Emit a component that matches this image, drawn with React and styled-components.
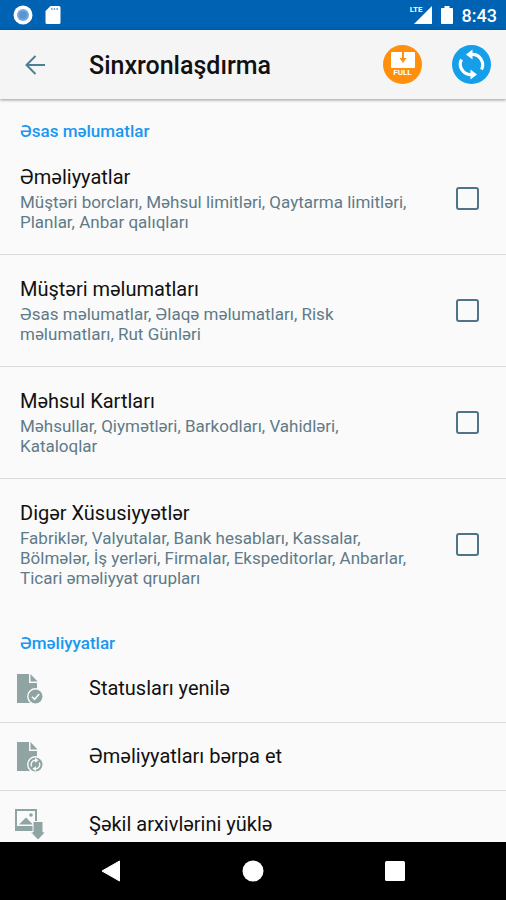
import React from "react";
import styled, { createGlobalStyle } from "styled-components";

const settings = [
  {
    id: "emeliyyatlar",
    title: "Əməliyyatlar",
    summary:
      "Müştəri borcları, Məhsul limitləri, Qaytarma limitləri, Planlar, Anbar qalıqları",
  },
  {
    id: "musteri",
    title: "Müştəri məlumatları",
    summary: "Əsas məlumatlar, Əlaqə məlumatları, Risk məlumatları, Rut Günləri",
  },
  {
    id: "mehsul",
    title: "Məhsul Kartları",
    summary: "Məhsullar, Qiymətləri, Barkodları, Vahidləri, Kataloqlar",
  },
  {
    id: "diger",
    title: "Digər Xüsusiyyətlər",
    summary:
      "Fabriklər, Valyutalar, Bank hesabları, Kassalar, Bölmələr, İş yerləri, Firmalar, Ekspeditorlar, Anbarlar, Ticari əməliyyat qrupları",
  },
];

const FileShape = () => (
  <>
    <path d="M3 1h12v9h8v20H3z" />
    <path d="M16.5 1l7 7.5h-7z" />
  </>
);

const FileCheckIcon = () => (
  <svg width="31" height="32" viewBox="0 0 31 32" fill="#90a4a4">
    <FileShape />
    <circle cx="21.5" cy="23.5" r="7.7" stroke="#fafafa" strokeWidth="1.4" />
    <path d="M18 23.7l2.6 2.6 4.6-5.4" fill="none" stroke="#fafafa" strokeWidth="1.6" />
  </svg>
);

const FileSyncIcon = () => (
  <svg width="31" height="32" viewBox="0 0 31 32" fill="#90a4a4">
    <FileShape />
    <circle cx="21.5" cy="23.5" r="7.7" stroke="#fafafa" strokeWidth="1.4" />
    <g fill="none" stroke="#fafafa" strokeWidth="1.3">
      <path d="M17.7 25.5a4.4 4.4 0 0 1 4-6.400" />
      <path d="M25.3 21.5a4.400 4.400 0 0 1-4 6.400" />
    </g>
    <path d="M21 16.800l3.600 2.400-3.600 2.600zM22 25.200v5l-3.600-2.400z" fill="#fafafa" />
  </svg>
);

const ImageDownIcon = () => (
  <svg width="31" height="32" viewBox="0 0 31 32" fill="#90a4a4">
    <path d="M1 0h22v22H1zM3 2v15h18V2z" fillRule="evenodd" />
    <circle cx="17" cy="6" r="1.8" />
    <path d="M5 15.500l7-7 7 7z" />
    <path d="M19 12.500h10V23h2.500L24 31l-7.500-8H19z" stroke="#fafafa" strokeWidth="1" />
  </svg>
);

const actions = [
  { title: "Statusları yenilə", Icon: FileCheckIcon },
  { title: "Əməliyyatları bərpa et", Icon: FileSyncIcon },
  { title: "Şəkil arxivlərini yüklə", Icon: ImageDownIcon },
];

const App = () => {
  return (
    <>
      <GlobalStyle />
      <Screen>
        <StatusBar>
          <StatusGroup>
            <svg width="20" height="20" viewBox="0 0 20 20">
              <circle cx="10" cy="10" r="9.5" fill="#fff" />
              <circle cx="10" cy="10" r="6" fill="#78aadb" />
              <circle cx="10" cy="10" r="4" fill="#5796d2" />
            </svg>
            <svg width="16" height="20" viewBox="0 0 16 20">
              <path
                d="M5.5 1H14a1.5 1.5 0 0 1 1.5 1.5v15A1.5 1.5 0 0 1 14 19H2a1.5 1.5 0 0 1-1.5-1.5V6z"
                fill="#fff"
              />
              <path d="M6 3h1.500v2H6zM8.700 3h1.500v2H8.700zM11.400 3h1.500v2h-1.500z" fill="#78aadb" />
            </svg>
          </StatusGroup>
          <StatusGroup $tight>
            <Signal>
              <small>LTE</small>
              <svg width="18" height="18" viewBox="0 0 18 18" fill="#fff">
                <path d="M18 0v18H0z" />
              </svg>
            </Signal>
            <svg width="12" height="18" viewBox="0 0 12 18" fill="#fff">
              <path d="M3.5 0h5v2H11a1 1 0 0 1 1 1v14a1 1 0 0 1-1 1H1a1 1 0 0 1-1-1V3a1 1 0 0 1 1-1h2.5z" />
            </svg>
            <Clock>8:43</Clock>
          </StatusGroup>
        </StatusBar>
        <Toolbar>
          <BackButton aria-label="Geri">
            <svg width="20" height="20" viewBox="0 0 20 20" fill="none" stroke="#4f7f92" strokeWidth="2">
              <path d="M20 10H2M10.5 1L1.5 10l9 9" />
            </svg>
          </BackButton>
          <Title>Sinxronlaşdırma</Title>
          <RoundButton $color="#ff8f0c" aria-label="Tam yüklə">
            <svg width="24" height="16" viewBox="0 0 24 16">
              <path d="M1 0h22a1 1 0 0 1 1 1v14a1 1 0 0 1-1 1H1a1 1 0 0 1-1-1V1a1 1 0 0 1 1-1z" fill="#fff" />
              <path d="M11 0h2v6h2.500L12 11 8.500 6H11z" fill="#ff8f0c" />
            </svg>
            <span>FULL</span>
          </RoundButton>
          <RoundButton $color="#149fe8" aria-label="Sinxronlaşdır">
            <svg width="39" height="39" viewBox="0 0 39 39">
              <g fill="none" stroke="#fff" strokeWidth="3.2">
                <path d="M19.5 9.5A10.300 10.300 0 0 1 29.500 24.500" />
                <path d="M9.500 14.500A10.300 10.300 0 0 0 19.500 29.500" />
              </g>
              <path d="M14 9.500L20.500 4.500v10zM25 29.500l-6.500-5v10z" fill="#fff" />
            </svg>
          </RoundButton>
        </Toolbar>
        <Content>
          <SectionTitle>Əsas məlumatlar</SectionTitle>
          {settings.map((item) => (
            <SettingRow key={item.id} htmlFor={item.id}>
              <div>
                <RowTitle>{item.title}</RowTitle>
                <Summary>{item.summary}</Summary>
              </div>
              <Checkbox id={item.id} type="checkbox" />
            </SettingRow>
          ))}
          <SectionTitle>Əməliyyatlar</SectionTitle>
          {actions.map(({ title, Icon }) => (
            <ActionRow key={title}>
              <Icon />
              <RowTitle>{title}</RowTitle>
            </ActionRow>
          ))}
        </Content>
        <NavBar>
          <button aria-label="Geri">
            <svg width="20" height="22" viewBox="0 0 20 22" fill="#fff">
              <path d="M18.5 1v20L1 11z" stroke="#fff" strokeLinejoin="round" />
            </svg>
          </button>
          <button aria-label="Əsas ekran">
            <svg width="22" height="22" viewBox="0 0 22 22" fill="#fff">
              <circle cx="11" cy="11" r="10.5" />
            </svg>
          </button>
          <button aria-label="Son tətbiqlər">
            <svg width="20" height="20" viewBox="0 0 20 20" fill="#fff">
              <rect width="20" height="20" rx="1.5" />
            </svg>
          </button>
        </NavBar>
      </Screen>
    </>
  );
};

export default App;

const GlobalStyle = createGlobalStyle`
  * {
    box-sizing: border-box;
  }
  body {
    margin: 0;
    font-family: Roboto, "Noto Sans", sans-serif;
    background-color: #fafafa;
  }
  button {
    border: none;
    padding: 0;
    background: none;
    font-family: inherit;
    cursor: pointer;
  }
  svg {
    display: block;
    flex-shrink: 0;
  }
`;
const Screen = styled.div`
  display: flex;
  flex-direction: column;
  height: 100vh;
`;
const StatusBar = styled.div`
  display: flex;
  justify-content: space-between;
  align-items: center;
  height: 30px;
  flex-shrink: 0;
  padding: 0 9px 0 13px;
  background-color: #0062b2;
  color: white;
`;
const StatusGroup = styled.div`
  display: flex;
  align-items: center;
  gap: ${(props) => (props.$tight ? "9px" : "12px")};
`;
const Signal = styled.div`
  display: flex;
  align-items: flex-start;
  & small {
    font-size: 8px;
    line-height: 8px;
    font-weight: 700;
    margin-right: -9px;
  }
`;
const Clock = styled.span`
  font-size: 18px;
  font-weight: 500;
`;
const Toolbar = styled.header`
  display: flex;
  align-items: center;
  height: 69px;
  flex-shrink: 0;
  padding: 0 15px 0 25px;
  gap: 30px;
  background-color: #f5f5f5;
  box-shadow: 0 1px 3px rgba(0, 0, 0, 0.4);
  z-index: 1;
`;
const BackButton = styled.button`
  width: 34px;
`;
const Title = styled.h1`
  flex: 1;
  margin: 0;
  padding-top: 2px;
  font-size: 25px;
  font-weight: 500;
  color: #111;
`;
const RoundButton = styled.button`
  display: flex;
  flex-direction: column;
  align-items: center;
  justify-content: center;
  width: 39px;
  height: 39px;
  flex-shrink: 0;
  border-radius: 50%;
  background-color: ${(props) => props.$color};
  & span {
    color: white;
    font-size: 8px;
    line-height: 9px;
    font-weight: 700;
  }
`;
const Content = styled.main`
  flex: 1;
  min-height: 0;
  overflow: hidden;
`;
const SectionTitle = styled.h2`
  margin: 0;
  padding: 21px 20px 1px;
  font-size: 17px;
  line-height: 22px;
  font-weight: 500;
  color: #1a98f0;
`;
const SettingRow = styled.label`
  display: flex;
  align-items: center;
  justify-content: space-between;
  gap: 40px;
  padding: 20px 27px 21px 20px;
  border-bottom: 1px solid #dcdcdc;
  &:last-of-type {
    border-bottom-color: transparent;
  }
`;
const RowTitle = styled.span`
  display: block;
  font-size: 20px;
  line-height: 29px;
  color: #111;
`;
const Summary = styled.span`
  display: block;
  font-size: 17px;
  line-height: 20px;
  padding-bottom: 1px;
  color: #5f7b88;
`;
const Checkbox = styled.input`
  appearance: none;
  width: 23px;
  height: 23px;
  flex-shrink: 0;
  margin: 0;
  border: 2px solid #4f7488;
  border-radius: 3px;
  &:checked {
    background-color: #4f7488;
  }
`;
const ActionRow = styled.button`
  display: flex;
  align-items: center;
  width: 100%;
  height: 68px;
  padding: 0 14px;
  gap: 44px;
  border-bottom: 1px solid #dcdcdc;
  text-align: left;
`;
const NavBar = styled.nav`
  display: flex;
  align-items: center;
  justify-content: space-around;
  height: 58px;
  flex-shrink: 0;
  padding: 0 40px;
  background-color: black;
`;
